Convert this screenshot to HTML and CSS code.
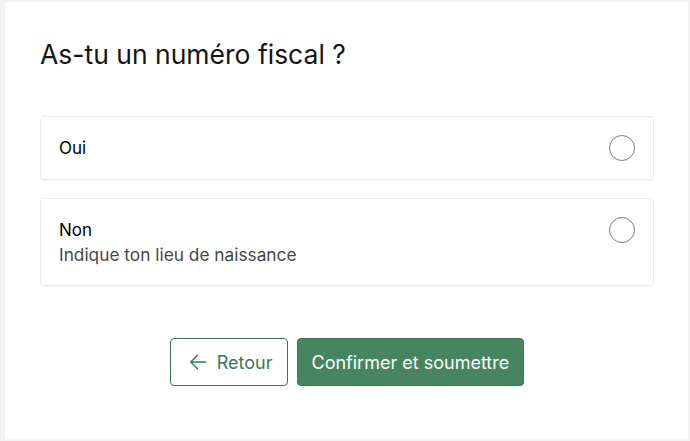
FILE: index.html
```html
<!DOCTYPE html>
<html lang="fr">
<head>
<meta charset="utf-8">
<title>Numéro fiscal</title>
<link rel="stylesheet" href="styles.css">
</head>
<body>
<main class="panel">
  <h1 class="title">As-tu un numéro fiscal ?</h1>
  <div class="options">
    <label class="option">
      <span class="option-text">
        <span class="option-label">Oui</span>
      </span>
      <span class="radio"></span>
    </label>
    <label class="option">
      <span class="option-text">
        <span class="option-label">Non</span>
        <span class="option-hint">Indique ton lieu de naissance</span>
      </span>
      <span class="radio"></span>
    </label>
  </div>
  <div class="actions">
    <button class="btn btn-outline" type="button">
      <svg class="arrow" width="18" height="18" viewBox="0 0 18 18" fill="none" stroke="currentColor" stroke-width="1.5" stroke-linecap="round" stroke-linejoin="round"><path d="M16.5 9H1.8M8.5 2.2L1.8 9l6.7 6.8"/></svg>
      <span>Retour</span>
    </button>
    <button class="btn btn-primary" type="button">Confirmer et soumettre</button>
  </div>
</main>
</body>
</html>
```
FILE: styles.css
```css
* { box-sizing: border-box; }
html, body { margin: 0; padding: 0; }
body {
  background: #f2f2f2;
  font-family: Inter, "Noto Sans", sans-serif;
  color: #111;
}
.panel {
  margin: 2px 2px 2px 5px;
  height: 437px;
  background: #fff;
  padding: 36px 34px 0 35px;
}
.title {
  margin: 0;
  font-size: 26.5px;
  line-height: 32px;
  font-weight: 400;
  color: #141414;
}
.options {
  margin-top: 46px;
  display: flex;
  flex-direction: column;
  gap: 18px;
}
.option {
  display: flex;
  align-items: flex-start;
  justify-content: space-between;
  border: 1px solid #e9e9e9;
  border-radius: 4px;
  box-shadow: 0 1px 1px rgba(0,0,0,0.03);
  padding: 20px 18px 18px 18px;
}
.option-text {
  display: flex;
  flex-direction: column;
}
.option-label {
  font-size: 17px;
  line-height: 22px;
  font-weight: 400;
  color: #000;
}
.option-hint {
  margin-top: 2px;
  font-size: 17.3px;
  line-height: 24px;
  color: #474747;
}
.radio {
  width: 26px;
  height: 26px;
  border: 1px solid #7a7a7a;
  border-radius: 50%;
  margin-top: -2px;
  flex: none;
}
.actions {
  margin-top: 52px;
  display: flex;
  justify-content: center;
  gap: 9px;
}
.btn {
  height: 48px;
  border-radius: 4px;
  font-family: Inter, "Noto Sans", sans-serif;
  font-size: 18px;
  font-weight: 400;
  display: flex;
  align-items: center;
  padding: 0 14px;
  cursor: pointer;
}
.btn-outline {
  background: #fff;
  color: #357a52;
  border: 1px solid #357a52;
  padding-left: 18px;
  gap: 10px;
}
.btn-primary {
  background: #46855f;
  color: #fff;
  border: 1px solid #3d7654;
}
.arrow { flex: none; }
```
